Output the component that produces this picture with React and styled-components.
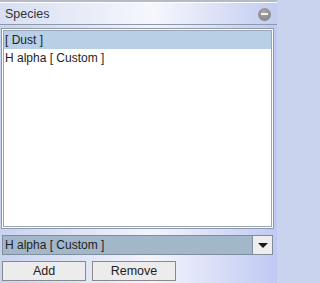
import React from "react";
import styled, { createGlobalStyle } from "styled-components";

const Global = createGlobalStyle`
  html, body { margin: 0; padding: 0; background: #c9d3ee; }
  body { font-family: "Liberation Sans", Arial, sans-serif; }
`;

const Panel = styled.div`
  width: 277px;
  height: 283px;
  box-sizing: border-box;
  border-top: 2px solid #b3bbcb;
  background: linear-gradient(to right, #c8d3ee 0%, #f3f5fc 55%, #c0c9f2 100%);
  display: flex;
  flex-direction: column;
  font-family: "Liberation Sans", Arial, sans-serif;
  font-size: 12px;
  color: #333;
`;

const TitleBar = styled.div`
  height: 23px;
  box-sizing: border-box;
  border-top: 1px solid #ffffff;
  border-bottom: 1px solid #8e99ad;
  display: flex;
  align-items: center;
  justify-content: space-between;
  padding: 1px 6px 0 5px;
  background: linear-gradient(to right, #d8dff1 0%, #f6f7fd 55%, #c3ccf1 100%);
`;

const Title = styled.span`
  font-size: 12.5px;
  color: #333;
`;

const MinusButton = styled.span`
  width: 13px;
  height: 13px;
  border-radius: 50%;
  background: radial-gradient(circle at 45% 35%, #a8a8a8, #7c7c7c);
  display: flex;
  align-items: center;
  justify-content: center;
  &::after {
    content: "";
    width: 7px;
    height: 2px;
    background: #f4f4f4;
  }
`;

const ListFrame = styled.div`
  margin: 3px 3px 0 1px;
  height: 201px;
  box-sizing: border-box;
  border: 1px solid #8d98ac;
  padding: 1px;
  background: #ffffff;
  display: flex;
`;

const ListInner = styled.div`
  flex: 1;
  border: 1px solid #9aa4b6;
  background: #ffffff;
  display: flex;
  flex-direction: column;
`;

const Row = styled.div`
  height: 18px;
  line-height: 18px;
  padding-left: 1px;
  font-size: 12px;
  color: #1e1e1e;
  background: ${(p) => (p.$selected ? "#b8cfe5" : "transparent")};
  white-space: nowrap;
`;

const Combo = styled.div`
  margin: 6px 4px 0 2px;
  height: 20px;
  box-sizing: border-box;
  border: 1px solid #7f8d9d;
  display: flex;
`;

const ComboValue = styled.div`
  flex: 1;
  background: #a3b7cb;
  border-right: 1px solid #7f8d9d;
  line-height: 18px;
  padding-left: 2px;
  font-size: 12px;
  color: #1e1e1e;
  white-space: nowrap;
`;

const ArrowButton = styled.div`
  width: 19px;
  background: #eeeeee;
  display: flex;
  align-items: center;
  justify-content: center;
  &::after {
    content: "";
    width: 0;
    height: 0;
    border-left: 5px solid transparent;
    border-right: 5px solid transparent;
    border-top: 5px solid #1a1a1a;
  }
`;

const Buttons = styled.div`
  margin: 6px 0 0 2px;
  display: flex;
  gap: 6px;
`;

const Button = styled.button`
  width: 84px;
  height: 20px;
  box-sizing: border-box;
  border: 1px solid #8a8a8a;
  background: #ececec;
  font-family: "Liberation Sans", Arial, sans-serif;
  font-size: 12.5px;
  color: #222;
  padding: 0;
  margin: 0;
`;

export default function App() {
  return (
    <>
      <Global />
      <Panel>
        <TitleBar>
          <Title>Species</Title>
          <MinusButton />
        </TitleBar>
        <ListFrame>
          <ListInner>
            <Row $selected>[ Dust ]</Row>
            <Row>H alpha [ Custom ]</Row>
          </ListInner>
        </ListFrame>
        <Combo>
          <ComboValue>H alpha [ Custom ]</ComboValue>
          <ArrowButton />
        </Combo>
        <Buttons>
          <Button>Add</Button>
          <Button>Remove</Button>
        </Buttons>
      </Panel>
    </>
  );
}
